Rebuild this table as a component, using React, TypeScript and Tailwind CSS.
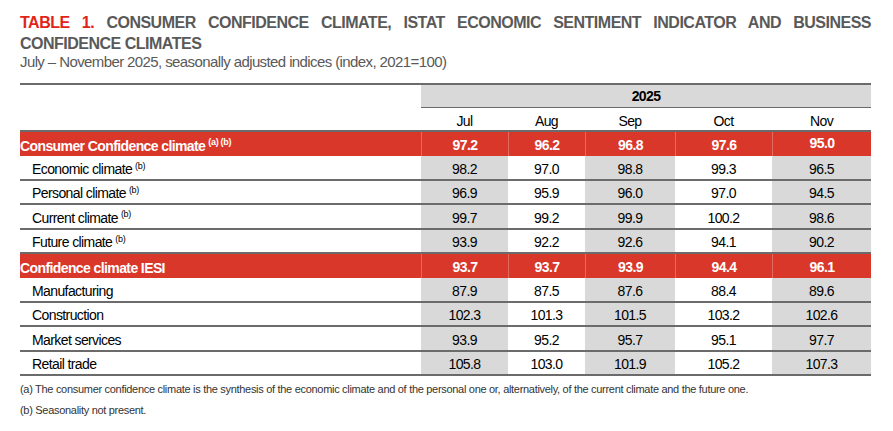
import React from "react";

const SANS = "font-['Liberation_Sans','Arial',sans-serif]";

type Row = {
  label: string;
  notes?: string;
  values: string[];
  head?: boolean;
};

const ROWS: Row[] = [
  { label: "Consumer Confidence climate", notes: "(a) (b)", values: ["97.2", "96.2", "96.8", "97.6", "95.0"], head: true },
  { label: "Economic climate", notes: "(b)", values: ["98.2", "97.0", "98.8", "99.3", "96.5"] },
  { label: "Personal climate", notes: "(b)", values: ["96.9", "95.9", "96.0", "97.0", "94.5"] },
  { label: "Current climate", notes: "(b)", values: ["99.7", "99.2", "99.9", "100.2", "98.6"] },
  { label: "Future climate", notes: "(b)", values: ["93.9", "92.2", "92.6", "94.1", "90.2"] },
  { label: "Confidence climate IESI", values: ["93.7", "93.7", "93.9", "94.4", "96.1"], head: true },
  { label: "Manufacturing", values: ["87.9", "87.5", "87.6", "88.4", "89.6"] },
  { label: "Construction", values: ["102.3", "101.3", "101.5", "103.2", "102.6"] },
  { label: "Market services", values: ["93.9", "95.2", "95.7", "95.1", "97.7"] },
  { label: "Retail trade", values: ["105.8", "103.0", "101.9", "105.2", "107.3"] },
];

const MONTHS = ["Jul", "Aug", "Sep", "Oct", "Nov"];
const COL_W = ["w-[87px]", "w-[77px]", "w-[90px]", "w-[97px]", "w-[99px]"];
const SHADED = [true, false, true, false, true];

export default function App() {
  return (
    <div className={`w-[893px] h-[431px] bg-white pl-[20px] pt-[12px] ${SANS}`}>
      {/* Title */}
      <h1 className="w-[851px] text-[16px] leading-[21px] font-bold tracking-[-0.5px] text-[#595959] text-justify">
        <span className="text-[#e2231a]">TABLE 1.</span> CONSUMER CONFIDENCE CLIMATE, ISTAT ECONOMIC SENTIMENT INDICATOR AND BUSINESS CONFIDENCE CLIMATES
      </h1>
      <p className="text-[15px] leading-[16px] tracking-[-0.6px] text-[#595959]">
        July – November 2025, seasonally adjusted indices (index, 2021=100)
      </p>

      {/* Table */}
      <div className="mt-[13px] w-[851px] border-t-2 border-[#6b6b6b] text-[14px] tracking-[-0.6px] text-black">
        <div className="flex h-[23px]">
          <div className="w-[401px]" />
          <div className="w-[450px] bg-[#d9d9d9] border-b border-[#6b6b6b] flex items-center justify-center font-bold">
            2025
          </div>
        </div>
        <div className="flex h-[24px] border-b-2 border-[#6b6b6b]">
          <div className="w-[401px]" />
          {MONTHS.map((m, i) => (
            <div key={m} className={`${COL_W[i]} flex items-center justify-center pt-[5px]`}>
              {m}
            </div>
          ))}
        </div>

        {ROWS.map((row) => (
          <div
            key={row.label}
            className={`flex h-[24.4px] ${row.head ? "bg-[#da372b] text-white font-bold" : "border-b-2 border-[#6b6b6b]"}`}
          >
            <div className={`w-[401px] flex items-center pt-[4px] ${row.head ? "pl-0" : "pl-[12px]"}`}>
              {row.label}
              {row.notes && (
                <sup className="ml-[3px] text-[9px] tracking-[-0.3px] top-[-4px]">{row.notes}</sup>
              )}
            </div>
            {row.values.map((v, i) => (
              <div
                key={i}
                className={`${COL_W[i]} flex justify-center ${
                  row.head
                    ? `border-l border-[#e66a60] ${row.label.startsWith("Consumer") && i === 4 ? "items-start pt-[1px]" : "items-center pt-[3px]"}`
                    : `items-center pt-[4px] ${SHADED[i] ? "bg-[#d9d9d9]" : "bg-white"}`
                }`}
              >
                {v}
              </div>
            ))}
          </div>
        ))}
      </div>

      {/* Footnotes */}
      <div className="mt-[3px] text-[11px] leading-[21px] tracking-[-0.3px] text-[#333] whitespace-nowrap">
        <p>(a) The consumer confidence climate is the synthesis of the economic climate and of the personal one or, alternatively, of the current climate and the future one.</p>
        <p>(b) Seasonality not present.</p>
      </div>
    </div>
  );
}
